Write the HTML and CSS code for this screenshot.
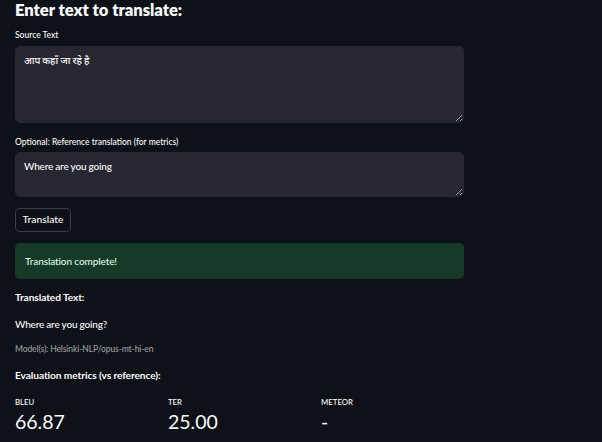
FILE: index.html
```html
<!DOCTYPE html>
<html lang="en">
<head>
<meta charset="utf-8">
<title>Translate</title>
<link rel="stylesheet" href="styles.css">
</head>
<body>
<main class="page">
  <h3 class="heading">Enter text to translate:</h3>

  <label class="field-label" for="src">Source Text</label>
  <textarea id="src" class="input input-tall" lang="hi">आप कहाँ जा रहे है</textarea>

  <label class="field-label field-label-2" for="ref">Optional: Reference translation (for metrics)</label>
  <textarea id="ref" class="input input-short">Where are you going</textarea>

  <div class="btn-row"><button class="btn" type="button">Translate</button></div>

  <div class="alert-success">Translation complete!</div>

  <p class="strong t-title">Translated Text:</p>
  <p class="body-text t-result">Where are you going?</p>
  <p class="caption">Model(s): Helsinki-NLP/opus-mt-hi-en</p>
  <p class="strong t-eval">Evaluation metrics (vs reference):</p>

  <div class="metrics">
    <div class="metric">
      <div class="metric-label">BLEU</div>
      <div class="metric-value">66.87</div>
    </div>
    <div class="metric">
      <div class="metric-label">TER</div>
      <div class="metric-value">25.00</div>
    </div>
    <div class="metric">
      <div class="metric-label">METEOR</div>
      <div class="metric-value">-</div>
    </div>
  </div>
</main>
</body>
</html>
```

FILE: styles.css
```css
html, body {
  margin: 0;
  padding: 0;
  background: #0e1117;
  height: 100%;
  overflow: hidden;
}

body {
  font-family: "Lato", "Noto Sans", "Noto Sans Devanagari", sans-serif;
  font-weight: 500;
  color: #fafafa;
}

.page {
  display: flex;
  flex-direction: column;
  width: 449px;
  padding-left: 15px;
}

.heading {
  margin: 0;
  font-size: 16.6px;
  line-height: 20px;
  font-weight: 800;
  letter-spacing: -0.05px;
}

.field-label {
  display: block;
  margin-top: 9px;
  font-size: 8.5px;
  line-height: 12px;
}

.field-label-2 {
  margin-top: 13px;
}

.input {
  display: block;
  box-sizing: border-box;
  width: 449px;
  margin: 5px 0 0;
  padding: 6px 8px;
  border: 1px solid #262730;
  border-radius: 5px;
  background: #262730;
  color: #fafafa;
  font-family: "Lato", "Noto Sans", "Noto Sans Devanagari", sans-serif;
  font-weight: 500;
  font-size: 10px;
  line-height: 15px;
  letter-spacing: -0.2px;
  resize: vertical;
  outline: none;
}

.input-tall {
  height: 77px;
}

.input-short {
  height: 45px;
  margin-top: 4px;
}

.btn-row {
  display: flex;
  margin-top: 11px;
}

.btn {
  box-sizing: border-box;
  height: 24px;
  width: 56px;
  padding: 0 0 1px;
  border: 1px solid rgba(250, 250, 250, 0.2);
  border-radius: 5px;
  background: #0e1117;
  color: #fafafa;
  font-family: "Lato", "Noto Sans", sans-serif;
  font-weight: 500;
  font-size: 10.3px;
  line-height: 21px;
}

.alert-success {
  box-sizing: border-box;
  margin-top: 11px;
  height: 36px;
  padding: 11px 10px;
  border-radius: 5px;
  background: #173928;
  color: #dffde9;
  font-size: 10px;
  line-height: 14px;
  letter-spacing: -0.1px;
}

.strong {
  margin: 0;
  font-weight: 700;
  font-size: 10.2px;
  line-height: 14px;
  letter-spacing: -0.1px;
}

.t-title { margin-top: 11px; }
.t-eval { margin-top: 13px; }

.body-text {
  margin: 13px 0 0;
  font-size: 10px;
  line-height: 14px;
  letter-spacing: -0.2px;
}

.caption {
  margin: 12px 0 0;
  font-size: 8.5px;
  line-height: 12px;
  letter-spacing: -0.1px;
  color: rgba(250, 250, 250, 0.6);
}

.metrics {
  display: grid;
  grid-template-columns: repeat(3, 1fr);
  column-gap: 10px;
  margin-top: 15px;
}

.metric-label {
  font-size: 7.8px;
  line-height: 10px;
}

.metric-value {
  margin-top: 4px;
  font-size: 19.5px;
  font-weight: 400;
  line-height: 22px;
}
```
